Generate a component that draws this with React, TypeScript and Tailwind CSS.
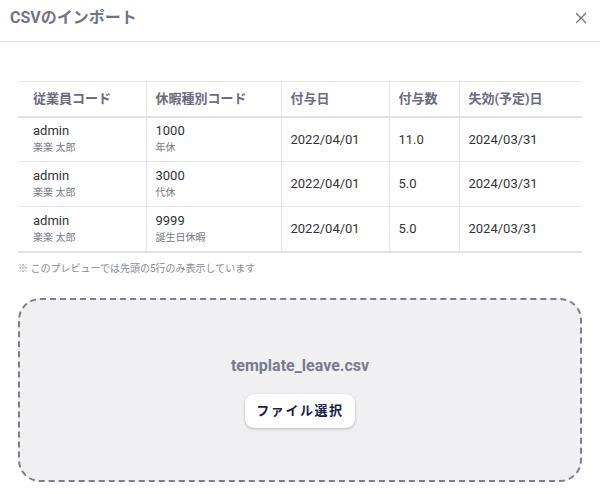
import { X } from 'lucide-react'

const rows = [
  { user: 'admin', name: '楽楽 太郎', code: '1000', type: '年休', date: '2022/04/01', days: '11.0', expire: '2024/03/31' },
  { user: 'admin', name: '楽楽 太郎', code: '3000', type: '代休', date: '2022/04/01', days: '5.0', expire: '2024/03/31' },
  { user: 'admin', name: '楽楽 太郎', code: '9999', type: '誕生日休暇', date: '2022/04/01', days: '5.0', expire: '2024/03/31' },
]

export default function App() {
  return (
    <div
      className="w-[600px] h-[494px] bg-white overflow-hidden"
      style={{ fontFamily: 'Roboto, "Noto Sans CJK JP", sans-serif' }}
    >
      {/* ヘッダー */}
      <header className="h-[42px] flex items-center justify-between pl-[10px] pr-[10px] border-b border-[#dcdce0]">
        <h1 className="text-[16px] font-bold text-[#737388] -mt-[6px]">CSVのインポート</h1>
        <X className="w-[18px] h-[18px] text-[#6e6e7a] -mt-[6px]" strokeWidth={1.6} />
      </header>

      <div className="px-[18px] pt-[39px]">
        <table className="w-full border-collapse text-[13px] text-[#333]">
          <thead>
            <tr className="h-[35px] border-t border-[#e6e6ea] border-b-2 border-b-[#e2e2e6]">
              <th className="w-[128px] text-left pl-[15px] font-bold text-[#6b6b7e] border-r border-[#e6e6ea]">従業員コード</th>
              <th className="w-[135px] text-left pl-[9px] font-bold text-[#6b6b7e] border-r border-[#e6e6ea]">休暇種別コード</th>
              <th className="w-[108px] text-left pl-[9px] font-bold text-[#6b6b7e] border-r border-[#e6e6ea]">付与日</th>
              <th className="w-[70px] text-left pl-[9px] font-bold text-[#6b6b7e] border-r border-[#e6e6ea]">付与数</th>
              <th className="text-left pl-[9px] font-bold text-[#6b6b7e]">失効(予定)日</th>
            </tr>
          </thead>
          <tbody>
            {rows.map((r, i) => (
              <tr
                key={i}
                className={
                  i === rows.length - 1
                    ? 'h-[45px] border-b-2 border-[#e2e2e6]'
                    : 'h-[45px] border-b border-[#e6e6ea]'
                }
              >
                <td className="pl-[15px] border-r border-[#e6e6ea]">
                  <div className="leading-[16px]">{r.user}</div>
                  <div className="text-[10px] leading-[14px] text-[#77778a] mt-[2px]">{r.name}</div>
                </td>
                <td className="pl-[9px] border-r border-[#e6e6ea]">
                  <div className="leading-[16px]">{r.code}</div>
                  <div className="text-[10px] leading-[14px] text-[#77778a] mt-[2px]">{r.type}</div>
                </td>
                <td className="pl-[9px] border-r border-[#e6e6ea]">{r.date}</td>
                <td className="pl-[9px] border-r border-[#e6e6ea]">{r.days}</td>
                <td className="pl-[9px]">{r.expire}</td>
              </tr>
            ))}
          </tbody>
        </table>

        <p className="mt-[8px] text-[10px] text-[#88889a]">※ このプレビューでは先頭の5行のみ表示しています</p>

        {/* ドロップゾーン */}
        <div className="mt-[22px] h-[184px] rounded-[22px] border-2 border-dashed border-[#7d7d90] bg-[#f0f0f3] flex flex-col items-center pt-[54px]">
          <div className="text-[16px] leading-[24px] font-bold text-[#7a7a8e]">template_leave.csv</div>
          <button className="mt-[16px] w-[110px] h-[34px] rounded-[9px] bg-white shadow-[0_1px_3px_rgba(0,0,0,0.25)] text-[13px] font-bold text-[#1c1c4e] tracking-[0.12em]">
            ファイル選択
          </button>
        </div>
      </div>
    </div>
  )
}
